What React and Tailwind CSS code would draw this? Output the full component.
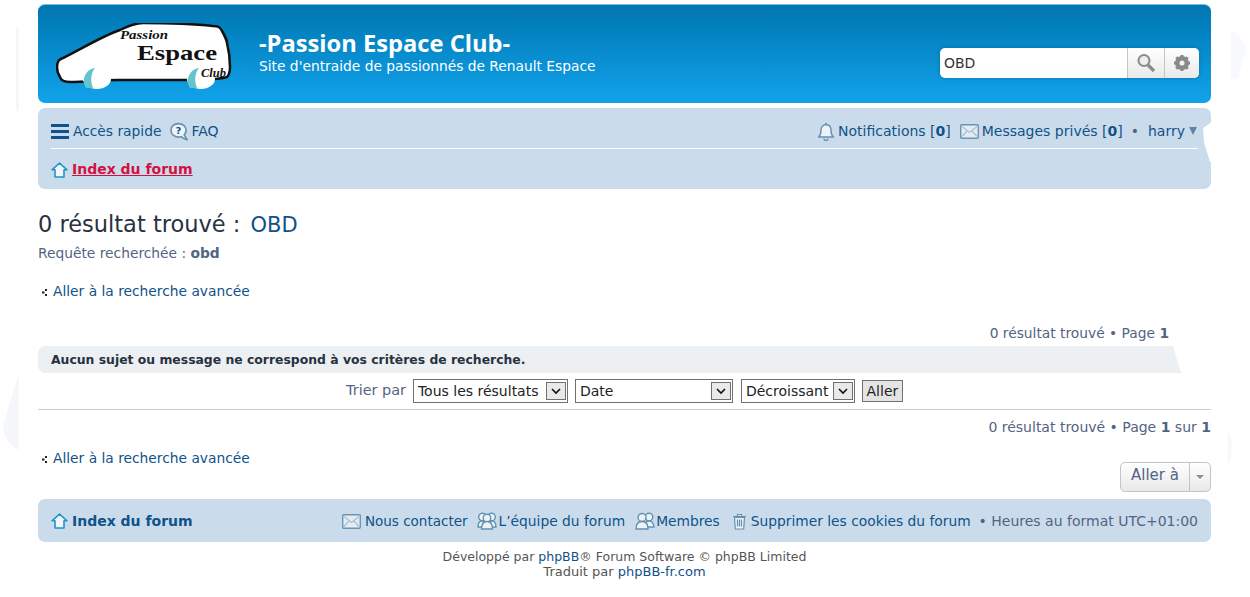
import React from "react";

const MailIcon = () => (
  <svg width="19" height="15" viewBox="0 0 19 15" className="shrink-0">
    <rect x="0.7" y="0.7" width="17.6" height="13.6" rx="1" fill="#e4ebf2" stroke="#6a95b3" strokeWidth="1.4" />
    <path d="M2 2.500 9.500 8.500 17 2.500M2 12.500 7 7M17 12.500 12 7" fill="none" stroke="#a9c0d3" strokeWidth="1.2" />
  </svg>
);

const HomeIcon = () => (
  <svg width="17" height="16" viewBox="0 0 17 16" className="shrink-0">
    <path d="M8.500 1 16 7.800h-3V15H4V7.800H1z" fill="#f1f5f9" stroke="#1e95c9" strokeWidth="1.600" strokeLinejoin="round" />
  </svg>
);

const TeamIcon = () => (
  <svg width="20" height="18" viewBox="0 0 20 18" className="shrink-0">
    <g fill="#eef3f8" stroke="#6492b2" strokeWidth="1.400">
      <circle cx="5.500" cy="5" r="3.800" />
      <circle cx="14.500" cy="5" r="3.800" />
      <path d="M1 15c0-4 1.500-6 4-6s3 1 4 3v3zM19 15c0-4-1.500-6-4-6s-3 1-4 3v3z" />
      <circle cx="10" cy="6" r="3.800" />
      <path d="M4.500 17c0-5 2.500-7.500 5.500-7.500s5.500 2.500 5.500 7.500z" />
    </g>
  </svg>
);

const MembersIcon = () => (
  <svg width="20" height="18" viewBox="0 0 20 18" className="shrink-0">
    <g fill="#eef3f8" stroke="#6492b2" strokeWidth="1.400">
      <circle cx="14" cy="5" r="3.800" />
      <path d="M10 15c0-4 2-6 4-6s5 2 5 6z" />
      <circle cx="7" cy="5.500" r="4" />
      <path d="M1 17c0-5 2.500-7.500 6-7.500s6 2.500 6 7.500z" />
    </g>
  </svg>
);

const TrashIcon = () => (
  <svg width="15" height="17" viewBox="0 0 15 17" className="shrink-0">
    <path d="M2.500 4.500h10l-.8 11.500H3.300zM1 3.500h13M5.500 3V1.500h4V3M5.500 6.500v7M7.500 6.500v7M9.500 6.500v7" fill="#eef3f8" stroke="#6492b2" strokeWidth="1.200" />
  </svg>
);

const BellIcon = () => (
  <svg width="18" height="19" viewBox="0 0 18 19" className="shrink-0">
    <path d="M1.500 15c2-1.500 2.500-3 2.500-6.500C4 5 6 2.800 9 2.800S14 5 14 8.500c0 3.500.5 5 2.500 6.500z" fill="#eef3f8" stroke="#6492b2" strokeWidth="1.400" strokeLinejoin="round" />
    <circle cx="9" cy="1.800" r="1" fill="#6492b2" />
    <path d="M7 16.500a2 2 0 0 0 4 0" fill="none" stroke="#6492b2" strokeWidth="1.400" />
  </svg>
);

const FaqIcon = () => (
  <svg width="19" height="20" viewBox="0 0 20 20" className="shrink-0">
    <path d="M9 1.200c4.500 0 8 3 8 7 0 2-.8 3.600-2 4.800l2.800 5c-2.500-.2-4.500-1.500-5.800-3-1 .3-2 .4-3 .4-4.500 0-8-3-8-7.200s3.500-7 8-7z" fill="#eef3f8" stroke="#6492b2" strokeWidth="1.800" />
    <text x="9" y="12" textAnchor="middle" fontSize="10" fontWeight="700" fill="#105289" fontFamily="DejaVu Sans">?</text>
  </svg>
);

const BackArrow = () => (
  <svg width="6" height="7" viewBox="0 0 6 7" className="ml-[4px] mr-[5px] mt-[2px] shrink-0">
    <path d="M3 0h2v2H3zM0 2.500h2.500v2H0zM3 5h2v2H3z" fill="#222" />
  </svg>
);

const SelectBox = ({ label, width }) => (
  <div className={`flex h-[24px] items-center justify-between border border-[#707070] bg-white pl-[4px] pr-[1px] ${width}`}>
    <span className="text-[14px] text-[#222]">{label}</span>
    <span className="flex h-[18px] w-[20px] items-center justify-center border border-[#707070] bg-[#e9e9e9]">
      <svg width="10" height="7" viewBox="0 0 10 7">
        <path d="M1 1l4 4 4-4" fill="none" stroke="#111" strokeWidth="1.600" />
      </svg>
    </span>
  </div>
);

const Logo = () => (
  <svg width="180" height="68" viewBox="0 0 180 68" className="shrink-0">
    <path d="M1 44c0-5 2-8 6-9C24 27 44 14 64 7 72 3 80 0 87 0c26 0 52 1 70 3 5 0 7 1 9 5 3 5 5 11 5 12 2 8 3 16 3 24 0 5-1 8-3 10-6 2-26 3-40 3-24 0-46 0-70 0-14 0-32 2-47 2-6 0-9-1-10-5-2-3-3-6-3-10z" fill="#fff" stroke="#111" strokeWidth="2.500" />
    <ellipse cx="41" cy="56" rx="14" ry="10" fill="#fff" />
    <ellipse cx="145" cy="56" rx="14" ry="10" fill="#fff" />
    <path d="M30 65c-5-9 0-19 9-20-4 5-5 13-2 20zM134 65c-5-9 0-19 9-20-4 5-5 13-2 20z" fill="#66c5cc" />
    <text x="64" y="16" fontSize="13" fontStyle="italic" fontWeight="700" textLength="48" lengthAdjust="spacingAndGlyphs" fontFamily="Liberation Serif" fill="#111">Passion</text>
    <text x="81" y="37" fontSize="22" fontWeight="700" textLength="80" lengthAdjust="spacingAndGlyphs" fontFamily="Liberation Serif" fill="#111">Espace</text>
    <text x="145" y="54" fontSize="12" fontStyle="italic" fontWeight="700" textLength="25" lengthAdjust="spacingAndGlyphs" fontFamily="Liberation Serif" fill="#111">Club</text>
  </svg>
);

export default function App() {
  return (
    <div className="relative h-[597px] overflow-hidden bg-white font-['DejaVu_Sans',sans-serif] text-[13.8px] text-[#536482]">
      {/* faint leftover patches in the page background */}
      <svg width="1250" height="597" className="pointer-events-none absolute inset-0">
        <path d="M19 28H16V110L19 112z" fill="#f5f7fb" />
        <path d="M19 372 3 425c0 12 8 22 16 25z" fill="#f5f7fb" />
        <path d="M1231 30c6 2 12 10 15 18-2 12-6 20-8 30l-7 2z" fill="#f8f9fc" />
        <path d="M1228 430c5 10 5 25 0 35z" fill="#f6f8fc" />
      </svg>

      <div className="relative mx-[38px] w-[1173px] pt-[4px]">
        <header className="flex h-[99px] items-start rounded-[7px] border-t border-[#6cc0e8] bg-gradient-to-b from-[#0076b1] to-[#12a3eb] pl-[18px] pr-[12px]">
          <div className="mt-[18px]">
            <Logo />
          </div>
          <div className="ml-[23px] mt-[24px] text-white">
            <h1 className="text-[23.7px] font-bold leading-[29px] font-['Open_Sans',sans-serif]">-Passion Espace Club-</h1>
            <p className="text-[13.8px] leading-[17px]">Site d'entraide de passionnés de Renault Espace</p>
          </div>
          <div className="ml-auto mt-[43px] flex h-[30px] w-[259px] overflow-hidden rounded-[5px] bg-white shadow-[0_0_4px_rgba(0,0,0,0.2)]">
            <div className="flex-1 pl-[4px] text-[14px] leading-[30px] text-[#333]">OBD</div>
            <div className="flex w-[38px] items-center justify-center border-x border-[#c7c3bf] bg-gradient-to-b from-white to-[#e9e9e9]">
              <svg width="20" height="20" viewBox="0 0 20 20">
                <circle cx="8" cy="7.500" r="5.500" fill="#eee" stroke="#8a8a8a" strokeWidth="2" />
                <path d="M12 12l6 6" stroke="#8a8a8a" strokeWidth="3.200" />
              </svg>
            </div>
            <div className="flex w-[34px] items-center justify-center bg-gradient-to-b from-white to-[#e9e9e9]">
              <svg width="18" height="18" viewBox="0 0 18 18">
                <circle cx="9" cy="9" r="5" fill="none" stroke="#8a8a8a" strokeWidth="4" />
                <path d="M9 1v16M1 9h16M3.300 3.300l11.400 11.400M14.700 3.300 3.300 14.700" stroke="#8a8a8a" strokeWidth="3" />
                <circle cx="9" cy="9" r="2.500" fill="#f2f2f2" />
              </svg>
            </div>
          </div>
        </header>

        <nav className="relative mt-[5px] h-[81px] rounded-[7px] bg-[#cadceb] px-[13px]">
          <div className="flex h-[41px] items-center border-b border-white pt-[7px]">
            <div className="flex items-center text-[#105289]">
              <span className="mr-[4px] flex w-[18px] flex-col gap-[3px]">
                <span className="h-[3px] bg-[#105289]" />
                <span className="h-[3px] bg-[#105289]" />
                <span className="h-[3px] bg-[#105289]" />
              </span>
              Accès rapide
            </div>
            <div className="ml-[9px] flex items-center gap-[2px] text-[#105289]">
              <FaqIcon />
              <span className="text-[14px]">FAQ</span>
            </div>
            <div className="ml-auto flex items-center text-[14px] text-[#105289]">
              <BellIcon />
              <span className="ml-[3px]">Notifications [<b>0</b>]</span>
              <span className="ml-[9px]"><MailIcon /></span>
              <span className="ml-[3px]">Messages privés [<b>0</b>]</span>
              <span className="ml-[8px] mr-[9px] text-[#536482]">•</span>
              <span>harry</span>
              <span className="mb-[2px] ml-[4px] mr-[1px] h-0 w-0 border-x-[4px] border-t-[8px] border-x-transparent border-t-[#5d86a8]" />
            </div>
          </div>
          <div className="flex h-[40px] items-center pt-[1px]">
            <HomeIcon />
            <a className="ml-[4px] text-[14px] font-bold text-[#d31141] underline">Index du forum</a>
          </div>
          {/* white notch where the bar was cut out on the right */}
          <svg width="8" height="40" viewBox="0 0 8 40" className="absolute right-0 top-[14px]">
            <path d="M8 0C6 3 2 4 0 6l1 14 6 20h1z" fill="#fff" />
          </svg>
        </nav>

        <h2 className="mt-[19px] text-[22.500px] leading-[32px] text-[#28313f]">
          0 résultat trouvé : <span className="ml-[3px] text-[21px] text-[#105289]">OBD</span>
        </h2>
        <p className="mt-[3px] leading-[18px]">
          Requête recherchée : <b>obd</b>
        </p>

        <div className="mt-[20px] flex items-center leading-[18px] text-[#105289]">
          <BackArrow />
          Aller à la recherche avancée
        </div>

        <div className="mt-[24px] flex justify-end pr-[42px] leading-[18px]">
          <span>0 résultat trouvé • Page <b>1</b></span>
        </div>

        <div className="relative mt-[4px] h-[27px] rounded-[7px] bg-[#ecf0f3] pl-[13px] text-[12.400px] font-bold leading-[27px] text-[#28313f]">
          Aucun sujet ou message ne correspond à vos critères de recherche.
          <svg width="38" height="27" viewBox="0 0 38 27" className="absolute right-0 top-0">
            <path d="M0 0h38v27H8z" fill="#fff" />
          </svg>
        </div>

        <div className="flex h-[37px] items-center justify-center border-b border-[#ccc]">
          <span className="mr-[7px] text-[14.400px]">Trier par</span>
          <SelectBox label="Tous les résultats" width="w-[155px]" />
          <span className="w-[7px]" />
          <SelectBox label="Date" width="w-[158px]" />
          <span className="w-[8px]" />
          <SelectBox label="Décroissant" width="w-[114px]" />
          <span className="w-[7px]" />
          <span className="flex h-[22px] w-[41px] items-center justify-center border border-[#707070] bg-[#e4e4e4] text-[14px] text-[#222]">Aller</span>
        </div>

        <div className="mt-[8px] text-right text-[14px] leading-[18px]">
          0 résultat trouvé • Page <b>1</b> sur <b>1</b>
        </div>

        <div className="mt-[13px] flex items-center leading-[18px] text-[#105289]">
          <BackArrow />
          Aller à la recherche avancée
        </div>

        <div className="-mt-[5px] flex justify-end">
          <div className="flex h-[30px] w-[91px] items-center rounded-[5px] border border-[#c7c3bf] bg-gradient-to-b from-white to-[#e9e9e9] text-[15px] text-[#536482]">
            <span className="w-[68px] pb-[4px] text-center">Aller à</span>
            <span className="flex h-full flex-1 items-center justify-center border-l border-[#c7c3bf]">
              <span className="h-0 w-0 border-x-[4px] border-t-[4px] border-x-transparent border-t-[#8f8f8f]" />
            </span>
          </div>
        </div>

        <footer className="mt-[7px] flex h-[43px] items-center rounded-[7px] bg-[#cadceb] px-[13px] pt-[1px]">
          <HomeIcon />
          <span className="ml-[4px] text-[14px] font-bold text-[#105289]">Index du forum</span>
          <div className="ml-auto flex items-center text-[#105289]">
            <MailIcon />
            <span className="ml-[4px] text-[13.500px]">Nous contacter</span>
            <span className="ml-[9px]"><TeamIcon /></span>
            <span className="ml-[2px]">L’équipe du forum</span>
            <span className="ml-[10px]"><MembersIcon /></span>
            <span className="ml-[1px]">Membres</span>
            <span className="ml-[12px]"><TrashIcon /></span>
            <span className="ml-[4px]">Supprimer les cookies du forum</span>
            <span className="ml-[8px] text-[14px] text-[#536482]">• Heures au format UTC+01:00</span>
          </div>
        </footer>

        <div className="mt-[7px] text-center leading-[15px] text-[#555]">
          <p className="text-[12.500px]">Développé par <span className="text-[#105289]">phpBB</span>® Forum Software © phpBB Limited</p>
          <p className="text-[13px]">Traduit par <span className="text-[#105289]">phpBB-fr.com</span></p>
        </div>
      </div>
    </div>
  );
}
